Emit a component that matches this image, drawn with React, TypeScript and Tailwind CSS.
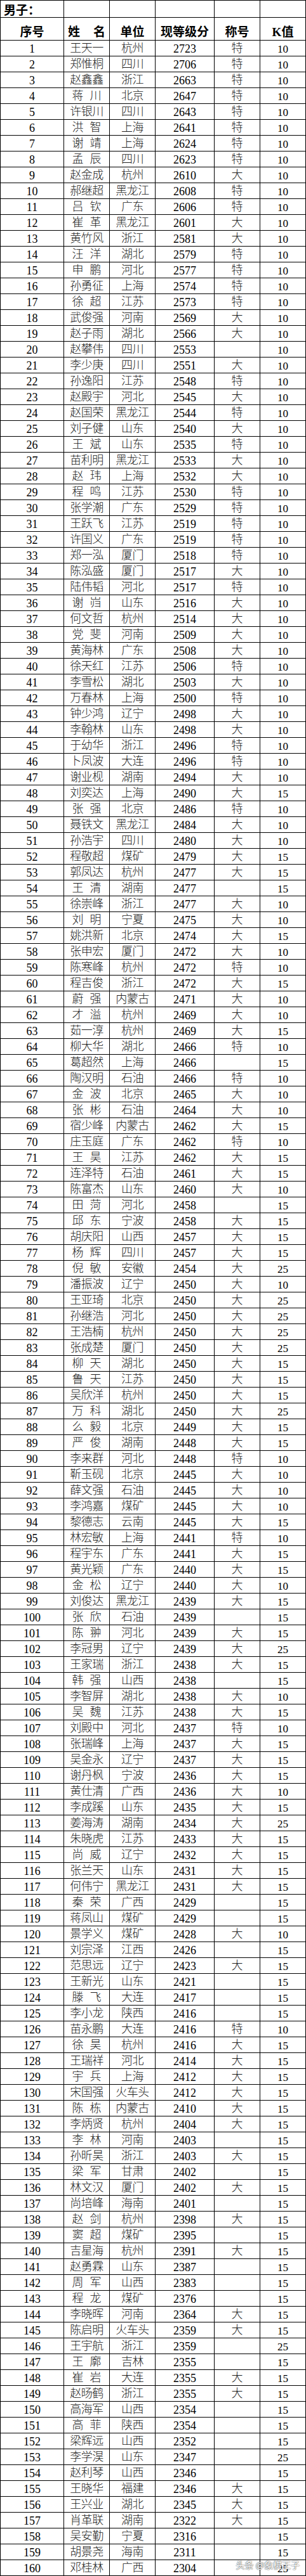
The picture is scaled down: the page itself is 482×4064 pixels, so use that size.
import React from 'react';

const raw = `王天一,杭州,2723,特,10
郑惟桐,四川,2706,特,10
赵鑫鑫,浙江,2663,特,10
蒋川,北京,2647,特,10
许银川,四川,2643,特,10
洪智,上海,2641,特,10
谢靖,上海,2624,特,10
孟辰,四川,2623,特,10
赵金成,杭州,2610,大,10
郝继超,黑龙江,2608,特,10
吕钦,广东,2606,特,10
崔革,黑龙江,2601,大,10
黄竹风,浙江,2581,大,10
汪洋,湖北,2579,特,10
申鹏,河北,2577,特,10
孙勇征,上海,2574,特,10
徐超,江苏,2573,特,10
武俊强,河南,2569,大,10
赵子雨,湖北,2566,大,10
赵攀伟,四川,2553,,10
李少庚,四川,2551,大,10
孙逸阳,江苏,2548,特,10
赵殿宇,河北,2545,大,10
赵国荣,黑龙江,2544,特,10
刘子健,山东,2540,大,10
王斌,山东,2535,特,10
苗利明,黑龙江,2533,大,10
赵玮,上海,2532,大,10
程鸣,江苏,2530,特,10
张学潮,广东,2529,特,10
王跃飞,江苏,2519,特,10
许国义,广东,2519,特,10
郑一泓,厦门,2518,特,10
陈泓盛,厦门,2517,大,10
陆伟韬,河北,2517,特,10
谢岿,山东,2516,大,10
何文哲,杭州,2514,大,10
党斐,河南,2509,大,10
黄海林,广东,2508,大,10
徐天红,江苏,2506,特,10
李雪松,湖北,2503,大,10
万春林,上海,2500,特,10
钟少鸿,辽宁,2498,大,10
李翰林,山东,2498,大,10
于幼华,浙江,2496,特,10
卜凤波,大连,2496,特,10
谢业枧,湖南,2494,大,10
刘奕达,上海,2490,大,15
张强,北京,2486,特,10
聂铁文,黑龙江,2484,大,10
孙浩宇,四川,2480,大,10
程敬超,煤矿,2479,大,15
郭凤达,杭州,2477,大,15
王清,湖南,2477,,15
徐崇峰,浙江,2477,大,10
刘明,宁夏,2475,大,10
姚洪新,北京,2474,大,15
张申宏,厦门,2472,大,10
陈寒峰,杭州,2472,特,10
程吉俊,浙江,2472,大,15
蔚强,内蒙古,2471,大,10
才溢,杭州,2469,大,10
茹一淳,杭州,2469,大,15
柳大华,湖北,2466,特,10
葛超然,上海,2466,,15
陶汉明,石油,2466,特,10
金波,北京,2465,大,10
张彬,石油,2464,大,10
宿少峰,内蒙古,2462,大,15
庄玉庭,广东,2462,特,10
王昊,江苏,2462,大,15
连泽特,石油,2461,大,15
陈富杰,山东,2460,大,10
田菏,河北,2458,,15
邱东,宁波,2458,大,15
胡庆阳,山西,2457,大,15
杨辉,四川,2457,大,15
倪敏,安徽,2454,大,25
潘振波,辽宁,2450,大,10
王亚琦,北京,2450,大,25
孙继浩,河北,2450,大,25
王浩楠,杭州,2450,大,25
张成楚,厦门,2450,大,25
柳天,湖北,2450,大,15
鲁天,江苏,2450,大,15
吴欣洋,杭州,2450,大,15
万科,湖北,2450,大,25
么毅,北京,2449,大,15
严俊,湖南,2448,大,15
李来群,河北,2448,特,10
靳玉砚,北京,2445,大,10
薛文强,石油,2445,大,10
李鸿嘉,煤矿,2445,大,10
黎德志,云南,2445,大,15
林宏敏,上海,2441,特,10
程宇东,广东,2441,大,15
黄光颖,广东,2440,大,15
金松,辽宁,2440,大,10
刘俊达,黑龙江,2439,大,15
张欣,石油,2439,,15
陈翀,河北,2439,大,15
李冠男,辽宁,2439,大,25
王家瑞,浙江,2438,大,15
韩强,山西,2438,,15
李智屏,湖北,2438,大,10
吴魏,江苏,2438,大,15
刘殿中,河北,2437,特,10
张瑞峰,上海,2437,大,15
吴金永,辽宁,2437,大,15
谢丹枫,宁波,2436,大,15
黄仕清,广西,2436,大,10
李成蹊,山东,2435,大,15
姜海涛,湖南,2434,大,25
朱晓虎,江苏,2433,大,15
尚威,辽宁,2432,大,15
张兰天,山东,2431,大,15
何伟宁,黑龙江,2431,大,15
秦荣,广西,2429,,15
蒋凤山,煤矿,2429,,15
景学义,煤矿,2428,大,10
刘宗泽,江西,2426,,15
范思远,辽宁,2423,大,15
王新光,山东,2421,,15
滕飞,大连,2417,,15
李小龙,陕西,2416,,15
苗永鹏,大连,2416,特,10
徐昊,杭州,2416,大,15
王瑞祥,河北,2414,大,15
宇兵,上海,2412,大,15
宋国强,火车头,2412,大,15
陈栋,内蒙古,2410,大,15
李炳贤,杭州,2404,大,15
李林,河南,2403,,15
孙昕昊,浙江,2403,大,15
梁军,甘肃,2402,,15
林文汉,厦门,2402,大,15
尚培峰,海南,2401,,15
赵剑,杭州,2398,大,15
窦超,煤矿,2395,,15
吉星海,杭州,2391,大,15
赵勇霖,山东,2387,,15
周军,山西,2383,,15
程龙,煤矿,2376,,15
李晓晖,河南,2364,大,15
陈启明,火车头,2359,大,15
王宇航,浙江,2359,,25
王廓,吉林,2355,,15
崔岩,大连,2355,大,15
赵旸鹤,浙江,2355,大,15
高海军,山西,2354,,15
高菲,陕西,2354,,15
梁辉远,山西,2352,,15
李学淏,山东,2347,,25
赵利琴,山西,2346,,15
王晓华,福建,2346,大,15
王兴业,湖北,2345,大,15
肖革联,湖南,2322,大,15
吴安勤,宁夏,2316,,15
胡景尧,海南,2311,,15
邓桂林,广西,2304,,25`;

const players = raw.split('\n').map((line, i) => {
  const [name, unit, score, title, k] = line.split(',');
  return { no: i + 1, name, unit, score, title, k };
});

const row = 'grid grid-cols-[100px_72px_72px_93px_72px_72px]';
const cell = 'border-r border-b border-black flex items-center justify-center';

function Name({ name }: { name: string }) {
  if (name.length === 2) {
    return (
      <span className="flex w-[46px] justify-between">
        <span>{name[0]}</span>
        <span>{name[1]}</span>
      </span>
    );
  }
  return <span className="tracking-[-0.5px]">{name}</span>;
}

export default function App() {
  return (
    <div className="w-[482px] bg-white text-black font-['Liberation_Serif','Noto_Sans_CJK_SC',serif]">
      <div className="relative border-l border-t border-black">
        {/* title row */}
        <div className={`${row} h-[27px]`}>
          <div className="border-r border-b border-black flex items-end pl-[5px] pb-[1px] text-[19px] font-bold leading-none">
            男子：
          </div>
          <div className={cell} />
          <div className={cell} />
          <div className={cell} />
          <div className={cell} />
          <div className={cell} />
        </div>

        {/* header */}
        <div className={`${row} h-[36px] text-[19px] font-bold leading-none`}>
          <div className="border-r border-b border-black flex items-end justify-center pb-[3px]">序号</div>
          <div className="border-r border-b border-black flex items-end justify-between px-[6px] pb-[3px]">
            <span>姓</span>
            <span>名</span>
          </div>
          <div className="border-r border-b border-black flex items-end justify-center pb-[3px]">单位</div>
          <div className="border-r border-b border-black flex items-end justify-center pb-[3px]">现等级分</div>
          <div className="border-r border-b border-black flex items-end justify-center pb-[3px]">称号</div>
          <div className="border-r border-b border-black flex items-end justify-center pb-[3px]">K值</div>
        </div>

        {players.map((p) => (
          <div key={p.no} className={`${row} h-[25px] text-[18px] leading-none`}>
            <div className={`${cell} pt-[1px]`}>{p.no}</div>
            <div className={`${cell} font-light text-[#222]`}>
              <Name name={p.name} />
            </div>
            <div className={`${cell} font-light text-[#222] tracking-[-0.5px]`}>{p.unit}</div>
            <div className={`${cell} pt-[1px]`}>{p.score}</div>
            <div className={`${cell} font-light text-[#222]`}>{p.title}</div>
            <div className={`${cell} pt-[3px] text-[17px]`}>{p.k}</div>
          </div>
        ))}

        {/* watermark */}
        <div className="absolute right-[10px] bottom-[7px] text-[14px] text-white font-['Noto_Sans_CJK_SC',sans-serif] [text-shadow:0_0_2px_#555,0_0_1px_#333]">
          头条 @象棋王子
        </div>
      </div>
    </div>
  );
}
